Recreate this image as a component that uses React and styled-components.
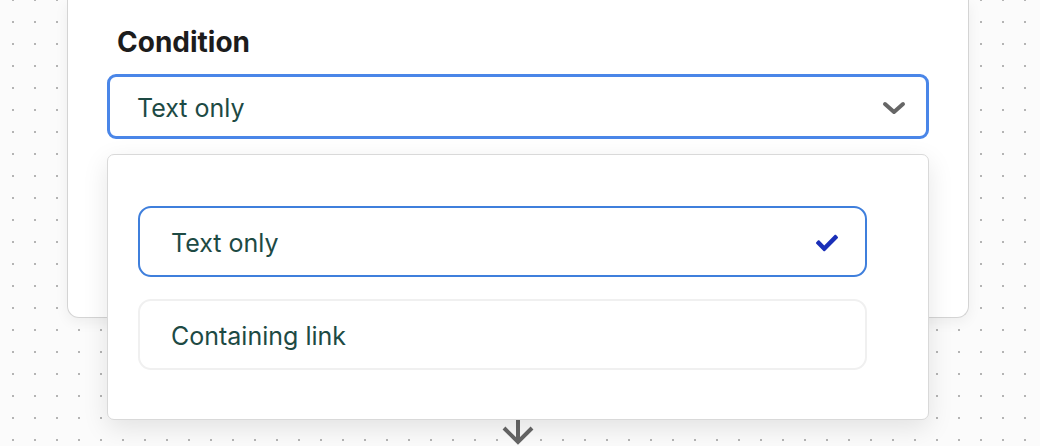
import React from "react";
import styled, { createGlobalStyle } from "styled-components";
import { FaCheck } from "react-icons/fa";

const GlobalStyle = createGlobalStyle`
  html, body {
    margin: 0;
    padding: 0;
    background: #fafafa;
  }
  body {
    font-family: Inter, "Noto Sans", "Liberation Sans", sans-serif;
  }
`;

const options = [
  { label: "Text only", selected: true },
  { label: "Containing link", selected: false },
];

const App = () => {
  return (
    <>
      <GlobalStyle />
      <Canvas>
        <Card>
          <Label>Condition</Label>
          <SelectWrap>
            <SelectBox>
              <SelectValue>Text only</SelectValue>
              <svg width="24" height="14" viewBox="0 0 24 14">
                <polyline
                  points="3,3 12,11 21,3"
                  fill="none"
                  stroke="#666"
                  strokeWidth="4"
                  strokeLinecap="round"
                  strokeLinejoin="round"
                />
              </svg>
            </SelectBox>
            <Menu>
              {options.map((opt) => (
                <Option key={opt.label} selected={opt.selected}>
                  <OptionText>{opt.label}</OptionText>
                  {opt.selected && <FaCheck size={22} color="#1a2fb8" />}
                </Option>
              ))}
            </Menu>
          </SelectWrap>
        </Card>
        <Connector>
          <svg width="36" height="40" viewBox="0 0 36 40">
            <line x1="18" y1="0" x2="18" y2="36" stroke="#666" strokeWidth="4" />
            <polyline
              points="4,22 18,36 32,22"
              fill="none"
              stroke="#666"
              strokeWidth="4"
              strokeLinejoin="miter"
            />
          </svg>
        </Connector>
      </Canvas>
    </>
  );
};

const Canvas = styled.div`
  width: 1040px;
  height: 446px;
  overflow: hidden;
  background-color: #fbfbfb;
  background-image: radial-gradient(circle, #b4b4b4 1px, transparent 1.3px);
  background-size: 22px 22px;
  background-position: 2px 11px;
  display: flex;
  flex-direction: column;
`;

const Card = styled.div`
  margin-left: 67px;
  width: 902px;
  height: 318px;
  box-sizing: border-box;
  background: #fff;
  border: 1px solid #d4d4d4;
  border-top: none;
  border-radius: 0 0 12px 12px;
  box-shadow: 0 4px 14px rgba(0, 0, 0, 0.06);
  padding: 25px 39px 0 39px;
  flex-shrink: 0;
`;

const Label = styled.div`
  font-size: 28px;
  font-weight: 700;
  color: #1c1c1c;
  padding-left: 10px;
  line-height: 34px;
  margin-bottom: 15px;
`;

const SelectWrap = styled.div`
  position: relative;
`;

const SelectBox = styled.div`
  height: 65px;
  box-sizing: border-box;
  border: 3px solid #4a86e8;
  border-radius: 9px;
  display: flex;
  align-items: center;
  justify-content: space-between;
  padding: 2px 20px 0 27px;
  background: #fff;
`;

const SelectValue = styled.span`
  font-size: 25px;
  color: #1d4a44;
`;

const Menu = styled.div`
  position: absolute;
  left: 0;
  right: 0;
  top: 80px;
  height: 266px;
  box-sizing: border-box;
  background: #fff;
  border: 1px solid #d9d9d9;
  border-radius: 7px;
  box-shadow: 0 8px 26px rgba(0, 0, 0, 0.1);
  padding: 51px 61px 0 30px;
  display: flex;
  flex-direction: column;
  gap: 22px;
  z-index: 2;
`;

const Option = styled.div`
  height: 71px;
  box-sizing: border-box;
  border: ${(p) => (p.selected ? "2px solid #3f7fdc" : "2px solid #f0f0f0")};
  border-radius: 13px;
  display: flex;
  align-items: center;
  justify-content: space-between;
  padding: 3px 27px 0 31px;
`;

const OptionText = styled.span`
  font-size: 25px;
  color: #1d4a44;
`;

const Connector = styled.div`
  margin-left: 67px;
  width: 902px;
  display: flex;
  justify-content: center;
  margin-top: 88px;
`;

export default App;
